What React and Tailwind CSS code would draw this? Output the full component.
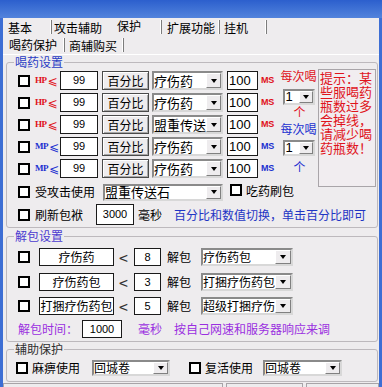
import React from 'react';

const num = "font-['Liberation_Sans',sans-serif]";

const Chk = ({ className = '' }) => (
  <div className={`w-[12px] h-[12px] border-2 border-black bg-white shrink-0 ${className}`} />
);

const Arrow = () => (
  <div className="w-0 h-0 border-x-[3.5px] border-x-transparent border-t-[4px] border-t-black" />
);

// sunken combo box with its drop button
const Sel = ({ className, text, textClass = 'text-[12px]', btn = 'w-[15px]' }) => (
  <div
    className={`flex items-stretch bg-white border-2 border-t-[#8a8a8a] border-l-[#8a8a8a] border-b-[#d8d8d8] border-r-[#d8d8d8] shrink-0 ${className}`}
  >
    <div className="flex-1 min-w-0 overflow-x-hidden flex items-center">
      <span className={`whitespace-nowrap leading-[12px] ${textClass}`}>{text}</span>
    </div>
    <div className={`${btn} shrink-0 bg-[#eeecee] border border-t-white border-l-white border-b-[#808080] border-r-[#808080] flex items-center justify-center`}>
      <Arrow />
    </div>
  </div>
);

const Field = ({ className, children }) => (
  <div className={`bg-white border border-[#1a1a1a] flex items-center shrink-0 leading-none ${className}`}>
    {children}
  </div>
);

const Sep = () => <div className="w-[2px] h-[14px] border-l border-l-white border-r border-r-[#7c7c7c] shrink-0" />;

const potionRows = [
  { kind: 'HP', item: '疗伤药' },
  { kind: 'HP', item: '疗伤药' },
  { kind: 'HP', item: '盟重传送石' },
  { kind: 'MP', item: '疗伤药' },
  { kind: 'MP', item: '疗伤药' },
];

const unpackRows = [
  { name: '疗伤药', n: '8', to: '疗伤药包', mt: 'mt-[5px]' },
  { name: '疗伤药包', n: '3', to: '打捆疗伤药包', mt: 'mt-[7px]' },
  { name: '打捆疗伤药包', n: '5', to: '超级打捆疗伤药包', mt: 'mt-[6px]' },
];

const hint = ['提示：某', '些服喝药', '瓶数过多', '会掉线，', '请减少喝', '药瓶数！'];

export default function App() {
  return (
    <div
      className="w-[382px] h-[387px] flex flex-col bg-[#3d6ed4] overflow-hidden text-black"
      style={{ fontFamily: '"Noto Sans CJK SC", "Noto Sans", sans-serif' }}
    >
      <div className="h-[18px] shrink-0 bg-linear-to-b from-[#2c5fcd] to-[#5283dc]" />

      <div className="flex-1 mx-[3px] bg-[#eeecee] flex flex-col text-[12px]">
        {/* main tabs */}
        <div className="h-[18px] shrink-0 flex items-center leading-[14px]">
          <div className="w-[47px] pl-[5px] pt-[1px]">基本</div>
          <Sep />
          <div className="w-[58px] pl-[2px] pt-[1px]">攻击辅助</div>
          <div className="w-[50px] pl-[7px] -mt-[3px]">保护</div>
          <Sep />
          <div className="w-[56px] pl-[5px] pt-[1px]">扩展功能</div>
          <Sep />
          <div className="w-[45px] pl-[4px] pt-[1px]">挂机</div>
          <Sep />
        </div>

        {/* sub tabs */}
        <div className="h-[19px] shrink-0 flex items-center leading-[14px] border-b border-white">
          <div className="w-[60px] pl-[6px]">喝药保护</div>
          <Sep />
          <div className="w-[57px] pl-[4px] pt-[2px]">商辅购买</div>
          <Sep />
        </div>

        {/* 喝药设置 */}
        <fieldset className="shrink-0 ml-[3px] w-[372px] border border-[#bdb9bd] rounded-[3px] pb-[2px]">
          <legend className="ml-[7px] px-[1px] leading-[14px] text-[#2a3dc4]">喝药设置</legend>

          <div className="flex items-start">
            <div className="w-[272px] pl-[11px] pt-[2px] flex flex-col gap-[3px]">
              {potionRows.map((r, i) => {
                const c = r.kind === 'HP' ? 'text-[#e0101a]' : 'text-[#1c30d0]';
                return (
                  <div key={i} className="h-[19px] flex items-center">
                    <Chk />
                    <div className={`ml-[5px] w-[25px] flex items-center ${c}`}>
                      <span className="font-['Liberation_Serif',serif] font-bold text-[9px] leading-none tracking-[-0.5px]">
                        {r.kind}
                      </span>
                      <span className="ml-[1px] text-[12px] leading-none font-['DejaVu_Sans',sans-serif]">⩽</span>
                    </div>
                    <Field className={`w-[38px] h-[19px] justify-center text-[11px] ${num}`}>99</Field>
                    <div className="ml-[4px] w-[47px] h-[19px] border border-[#4a4a4a] bg-[#eeecee] shadow-[inset_1px_1px_0_#fff,inset_-1px_-1px_0_#a8a8a8] flex items-center justify-center leading-none">
                      百分比
                    </div>
                    <Sel className="ml-[3px] w-[71px] h-[19px]" text={r.item} textClass="text-[13px]" btn="w-[15px]" />
                    <Field className={`ml-[4px] w-[31px] h-[19px] pl-[1px] text-[13px] ${num}`}>100</Field>
                    <span className={`ml-[3px] font-['Liberation_Sans',sans-serif] font-bold text-[9px] leading-none tracking-[-0.3px] ${c}`}>
                      MS
                    </span>
                  </div>
                );
              })}
            </div>

            <div className="w-[39px] flex flex-col items-center leading-[14px]">
              <span className="text-[#e0101a]">每次喝</span>
              <Sel className="mt-[6px] w-[32px] h-[16px]" text="1" textClass={`text-[13px] pl-[1px] ${num}`} btn="w-[14px]" />
              <span className="text-[#e0101a] pl-[2px]">个</span>
              <span className="mt-[3px] text-[#1c30d0]">每次喝</span>
              <Sel className="mt-[4px] w-[32px] h-[16px]" text="1" textClass={`text-[13px] pl-[1px] ${num}`} btn="w-[14px]" />
              <span className="mt-[4px] text-[#1c30d0] pl-[2px]">个</span>
            </div>

            <div className="w-[58px] h-[118px] -mb-[9px] border border-[#a9a5a9] bg-[#f1edf0] pl-[1px] pt-[1px] text-[13px] leading-[14px] text-[#e0141c]">
              {hint.map((l) => (
                <div key={l} className="whitespace-nowrap">{l}</div>
              ))}
            </div>
          </div>

          <div className="mt-[6px] h-[16px] pl-[11px] flex items-center leading-none">
            <Chk />
            <span className="ml-[5px]">受攻击使用</span>
            <Sel className="ml-[8px] w-[120px] h-[17px]" text="盟重传送石" textClass="text-[13px]" btn="w-[15px]" />
            <Chk className="ml-[7px] -mt-[4px]" />
            <span className="ml-[4px] -mt-[3px]">吃药刷包</span>
          </div>

          <div className="mt-[4px] h-[21px] pl-[11px] flex items-center leading-none">
            <Chk />
            <span className="ml-[5px]">刷新包袱</span>
            <Field className={`ml-[13px] w-[38px] h-[21px] justify-center text-[11px] ${num}`}>3000</Field>
            <span className="ml-[4px]">毫秒</span>
            <span className="ml-[12px] text-[#1f35c4]">百分比和数值切换，单击百分比即可</span>
          </div>
        </fieldset>

        {/* 解包设置 */}
        <fieldset className="shrink-0 mt-[1px] ml-[3px] w-[372px] border border-[#bdb9bd] rounded-[3px] pb-[3px]">
          <legend className="ml-[7px] px-[1px] leading-[14px] text-[#4b3ad0]">解包设置</legend>

          {unpackRows.map((r) => (
            <div key={r.name} className={`${r.mt} h-[18px] pl-[11px] flex items-center leading-none`}>
              <Chk />
              <Field className="ml-[9px] w-[75px] h-[18px] justify-center">{r.name}</Field>
              <span className="ml-[5px] w-[10px] text-[16px] leading-none text-[#333]">&lt;</span>
              <Field className={`ml-[5px] w-[27px] h-[18px] justify-center text-[11px] ${num}`}>{r.n}</Field>
              <span className="ml-[6px]">解包</span>
              <Sel className="ml-[10px] w-[92px] h-[18px]" text={r.to} btn="w-[16px]" />
            </div>
          ))}

          <div className="mt-[5px] h-[18px] pl-[11px] flex items-center leading-none text-[#9a2fe0]">
            <span>解包时间：</span>
            <Field className={`ml-[4px] w-[40px] h-[18px] justify-center text-[11px] text-black ${num}`}>1000</Field>
            <span className="ml-[16px]">毫秒</span>
            <span className="ml-[12px]">按自己网速和服务器响应来调</span>
          </div>
        </fieldset>

        {/* 辅助保护 */}
        <fieldset className="shrink-0 ml-[3px] w-[372px] border border-[#bdb9bd] rounded-[3px] pb-[5px]">
          <legend className="ml-[7px] px-[1px] leading-[14px] text-[#303030]">辅助保护</legend>
          <div className="mt-[4px] h-[16px] pl-[9px] flex items-center leading-none">
            <Chk />
            <span className="ml-[4px]">麻痹使用</span>
            <Sel className="ml-[12px] w-[78px] h-[16px]" text="回城卷" btn="w-[15px]" />
            <Chk className="ml-[19px]" />
            <span className="ml-[4px]">复活使用</span>
            <Sel className="ml-[10px] w-[79px] h-[16px]" text="回城卷" btn="w-[15px]" />
          </div>
        </fieldset>

        <div className="flex-1 mt-[1px] flex gap-[3px]">
          <div className="w-[220px] border-t border-x border-[#a8a4a8]" />
          <div className="w-[77px] border-t border-x border-[#a8a4a8]" />
          <div className="flex-1 border-t border-x border-[#a8a4a8]" />
        </div>
      </div>
    </div>
  );
}
